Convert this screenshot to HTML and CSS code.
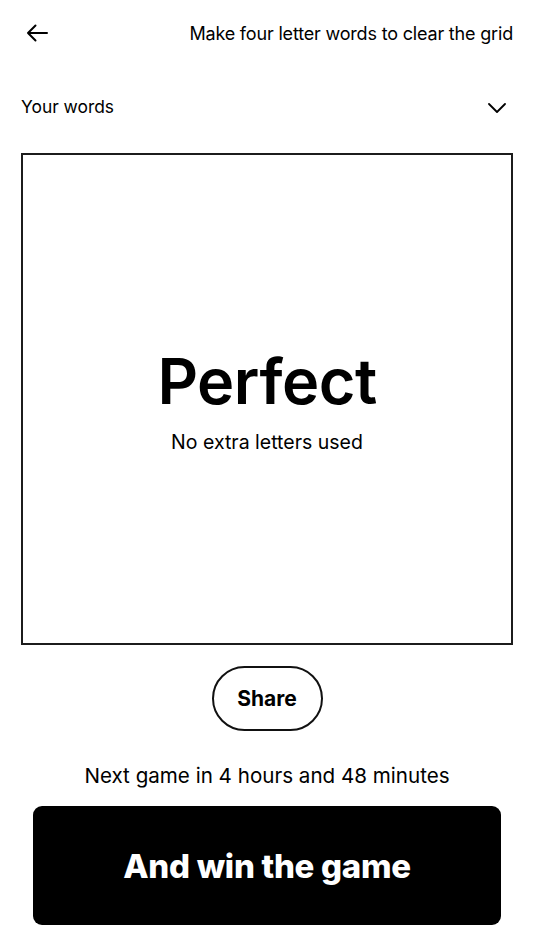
FILE: index.html
```html
<!DOCTYPE html>
<html>
<head>
<meta charset="utf-8">
<link rel="stylesheet" href="styles.css">
</head>
<body>
<div class="page">
  <header class="topbar">
    <svg class="back" width="22" height="18" viewBox="0 0 22 18" fill="none" stroke="#000" stroke-width="2" stroke-linecap="round" stroke-linejoin="round">
      <path d="M21 9H2M9.5 1.5L2 9l7.5 7.5"/>
    </svg>
    <div class="title">Make four letter words to clear the grid</div>
  </header>
  <div class="words-row">
    <span class="words-label">Your words</span>
    <svg class="chev" width="18" height="10" viewBox="0 0 18 10" fill="none" stroke="#000" stroke-width="1.8" stroke-linecap="round" stroke-linejoin="round">
      <path d="M1 1l8 8 8-8"/>
    </svg>
  </div>
  <section class="board">
    <div class="result">
      <div class="result-title">Perfect</div>
      <div class="result-sub">No extra letters used</div>
    </div>
  </section>
  <div class="share-wrap">
    <button class="share">Share</button>
  </div>
  <p class="next">Next game in 4 hours and 48 minutes</p>
  <div class="cta-wrap">
    <button class="cta">And win the game</button>
  </div>
</div>
</body>
</html>
```
FILE: styles.css
```css
* { box-sizing: border-box; }
html, body { margin: 0; padding: 0; background: #fff; }
body {
  font-family: Inter, "Noto Sans", sans-serif;
  color: #000;
  width: 534px;
}
.page { display: flex; flex-direction: column; }
.topbar {
  height: 66px;
  display: flex;
  align-items: center;
  justify-content: space-between;
  padding: 0 21px 0 26px;
}
.back { display: block; }
.title { font-size: 18px; letter-spacing: -0.18px; }
.words-row {
  height: 80px;
  display: flex;
  align-items: center;
  justify-content: space-between;
  padding: 0 28px 0 21px;
}
.words-label { font-size: 17.4px; }
.chev { display: block; margin-top: 3px; }
.board {
  margin: 7px 21px 0;
  height: 492px;
  border: 2px solid #1c1c1c;
  display: flex;
  align-items: center;
  justify-content: center;
}
.result { display: flex; flex-direction: column; align-items: center; margin-top: -2px; }
.result-title { font-size: 63px; font-weight: 600; line-height: 76px; letter-spacing: -0.5px; }
.result-sub { font-size: 19.5px; line-height: 24px; margin-top: 11px; }
.share-wrap { display: flex; justify-content: center; margin-top: 21px; }
.share {
  width: 111px; height: 65px;
  border: 2px solid #111;
  border-radius: 33px;
  background: #fff;
  font-family: inherit;
  font-size: 21px;
  font-weight: 700;
  color: #000;
  padding: 0;
}
.next {
  margin: 33px 0 0;
  text-align: center;
  font-size: 20.6px;
  line-height: 24px;
}
.cta-wrap { padding: 18px 33px 0; }
.cta {
  width: 100%;
  height: 119px;
  border: none;
  border-radius: 9px;
  background: #000;
  color: #fff;
  font-family: inherit;
  font-size: 33px;
  font-weight: 800;
  letter-spacing: -0.3px;
  padding: 0;
}
```
